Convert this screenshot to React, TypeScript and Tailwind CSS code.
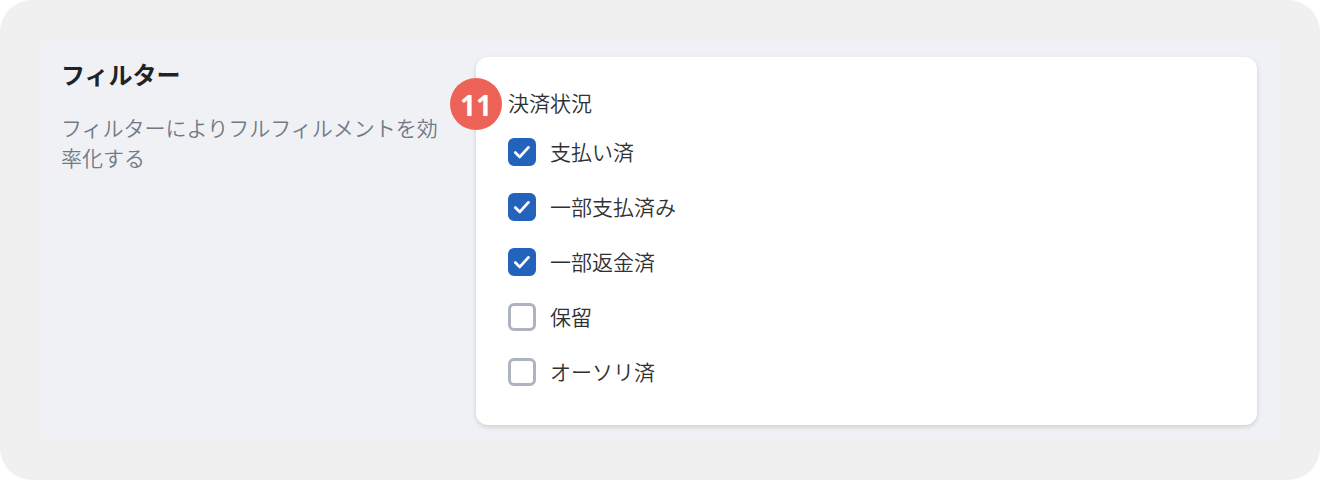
import React from "react";

type PaymentStatus = {
  id: string;
  label: string;
  checked: boolean;
};

const PAYMENT_STATUSES: PaymentStatus[] = [
  { id: "paid", label: "支払い済", checked: true },
  { id: "partially-paid", label: "一部支払済み", checked: true },
  { id: "partially-refunded", label: "一部返金済", checked: true },
  { id: "pending", label: "保留", checked: false },
  { id: "authorized", label: "オーソリ済", checked: false },
];

const StatusCheckbox: React.FC<{ status: PaymentStatus }> = ({ status }) => (
  <div className="flex items-center gap-3.5">
    <span className="grid size-7 shrink-0 place-items-center">
      <input
        id={status.id}
        type="checkbox"
        defaultChecked={status.checked}
        className="peer col-start-1 row-start-1 size-7 appearance-none rounded-md border-3 border-[#adb4bf] bg-white checked:border-[#2463bc] checked:bg-[#2463bc]"
      />
      <svg
        viewBox="0 0 28 28"
        className="pointer-events-none invisible col-start-1 row-start-1 size-7 peer-checked:visible"
        fill="none"
        stroke="white"
        strokeWidth="2.8"
        strokeLinecap="round"
        strokeLinejoin="round"
        aria-hidden="true"
      >
        <path d="M7.3 14.6 L11.8 18.9 L20.4 9.4" />
      </svg>
    </span>
    <label htmlFor={status.id} className="pt-0.5 text-[21px] leading-7">
      {status.label}
    </label>
  </div>
);

export default function App() {
  return (
    <main className="rounded-4xl bg-[#f0f0f0] p-10 font-['Inter','Noto_Sans_CJK_JP',sans-serif] text-[#303133]">
      <section className="flex items-stretch bg-[#f0f1f4] pt-[17px] pr-[23px] pb-[15px] pl-[21px]">
        <div className="w-[415px] shrink-0 pr-8">
          <h2 className="pt-px text-2xl leading-9 font-bold text-[#202225]">
            フィルター
          </h2>
          <p className="mt-5 text-[21px] leading-[30px] font-[350] text-[#717a86]">
            フィルターによりフルフィルメントを効率化する
          </p>
        </div>
        <div className="relative flex-1 rounded-xl bg-white px-8 pt-[33px] pb-[38px] font-[350] shadow-[0_2px_5px_rgba(0,0,0,0.14)]">
          <span className="absolute top-[21px] -left-[26px] flex size-[52px] items-center justify-center rounded-full bg-[#ed6358] pt-0.5 font-['Noto_Sans'] text-[28px] leading-none font-bold text-white">
            11
          </span>
          <fieldset>
            <legend className="mb-[19px] text-[21px] leading-7">決済状況</legend>
            <div className="flex flex-col gap-[25px]">
              {PAYMENT_STATUSES.map((status) => (
                <StatusCheckbox key={status.id} status={status} />
              ))}
            </div>
          </fieldset>
        </div>
      </section>
    </main>
  );
}
